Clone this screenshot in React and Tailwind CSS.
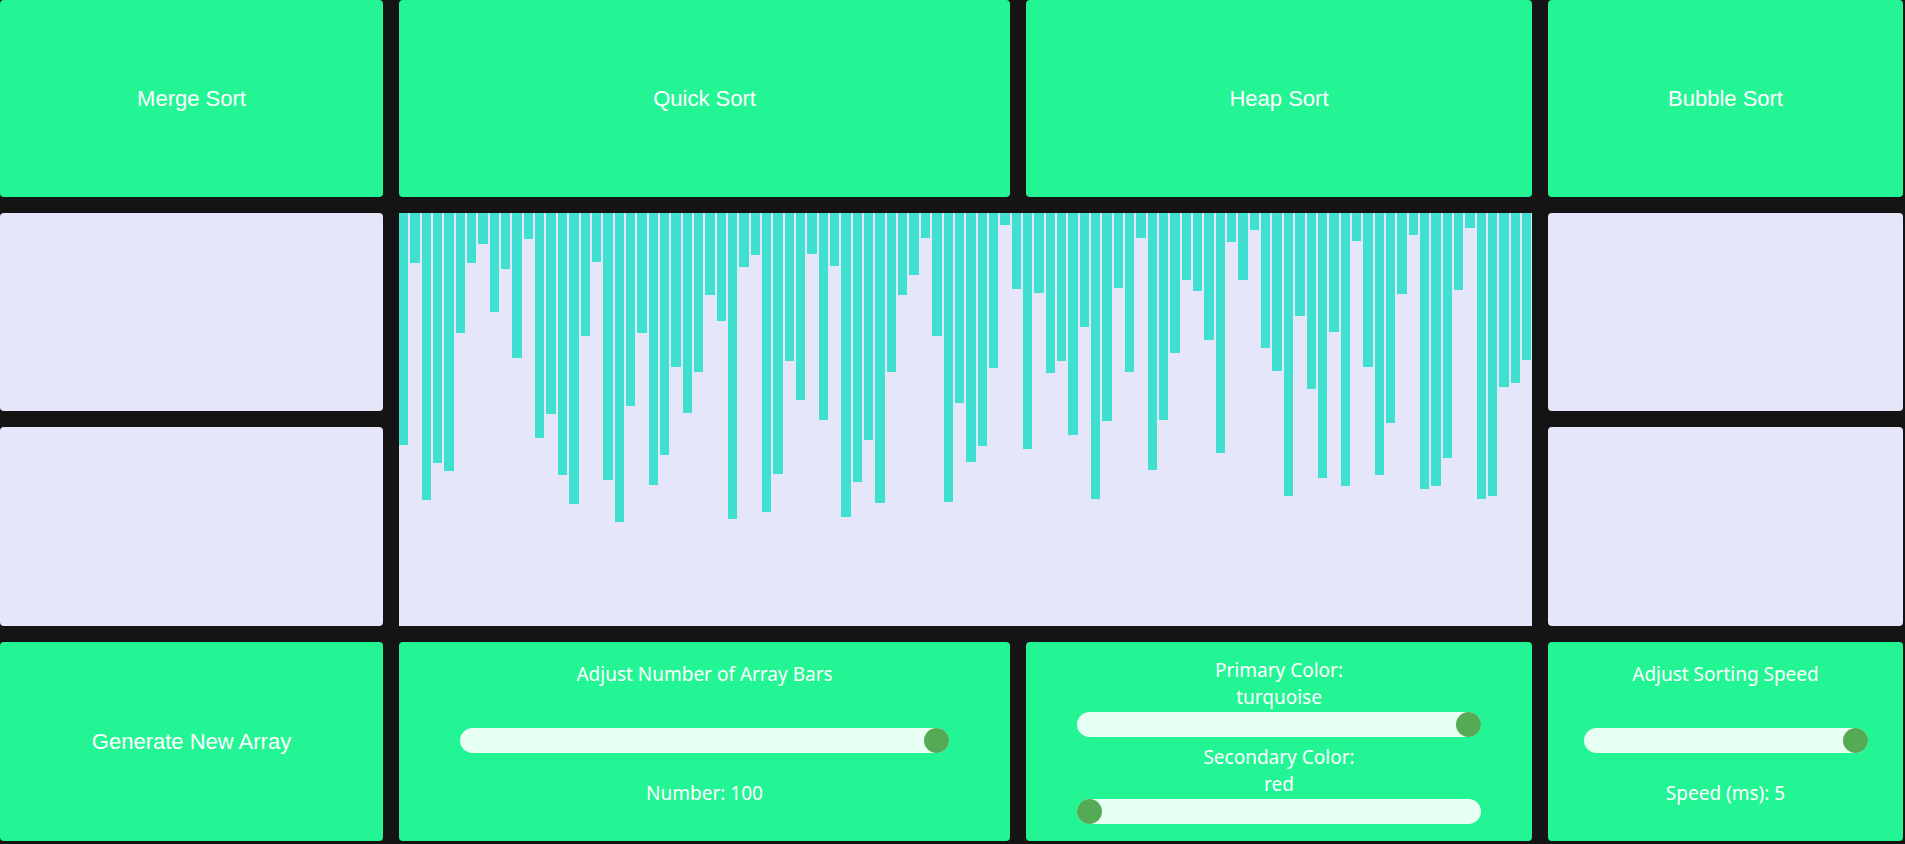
import React from 'react';

const BAR_HEIGHTS = [
  232, 50, 287, 250, 258, 120, 50, 31, 99, 56, 145, 26, 225, 201, 262, 291, 123, 49, 267, 309,
  193, 120, 272, 242, 154, 200, 159, 82, 108, 306, 54, 42, 299, 261, 148, 187, 41, 207, 53, 304,
  269, 227, 290, 159, 82, 62, 25, 123, 289, 190, 249, 233, 155, 12, 76, 236, 80, 160, 148, 222,
  114, 286, 208, 75, 159, 25, 257, 207, 140, 67, 78, 127, 240, 29, 67, 17, 135, 158, 283, 103,
  176, 265, 119, 273, 28, 154, 262, 210, 81, 22, 276, 273, 245, 77, 15, 286, 283, 174, 170, 147,
];

const SortButton = ({ label }) => (
  <button className="bg-[#24f594] rounded text-white text-[22px] font-['Liberation_Sans',Arial,sans-serif] flex items-center justify-center">
    {label}
  </button>
);

const Slider = ({ atEnd }) => (
  <div className={`w-4/5 mx-auto h-[25px] rounded-full bg-[#e8fff3] flex ${atEnd ? 'justify-end' : 'justify-start'}`}>
    <div className="w-[25px] h-[25px] rounded-full bg-[#55ab55]" />
  </div>
);

const App = () => {
  return (
    <div className="w-full h-screen bg-[#141414] overflow-hidden">
      <div className="grid grid-cols-[383px_611px_506px_355px] grid-rows-[197px_198px_199px_199px] gap-4">
        <SortButton label="Merge Sort" />
        <SortButton label="Quick Sort" />
        <SortButton label="Heap Sort" />
        <SortButton label="Bubble Sort" />

        <div className="bg-[#e6e6fa] rounded" />

        {/* array bars */}
        <div className="col-span-2 row-span-2 bg-[#e6e6fa] flex items-start gap-[2px]">
          {BAR_HEIGHTS.map((h, i) => (
            <div key={i} className="flex-1 bg-[#40e0d0]" style={{ height: `${h}px` }} />
          ))}
        </div>

        <div className="bg-[#e6e6fa] rounded" />
        <div className="bg-[#e6e6fa] rounded" />
        <div className="bg-[#e6e6fa] rounded" />

        <button className="bg-[#24f594] rounded text-white text-[22px] font-['Liberation_Sans',Arial,sans-serif] flex items-center justify-center">
          Generate New Array
        </button>

        <div className="bg-[#24f594] rounded text-white text-center text-[19px] leading-[27px] font-['Noto_Sans',sans-serif] pt-[19px]">
          <p>Adjust Number of Array Bars</p>
          <div className="mt-[40px]">
            <Slider atEnd />
          </div>
          <p className="mt-[27px]">Number: 100</p>
        </div>

        <div className="bg-[#24f594] rounded text-white text-center text-[19px] leading-[27px] font-['Noto_Sans',sans-serif] pt-[15px]">
          <p>Primary Color:</p>
          <p>turquoise</p>
          <div className="mt-[1px]">
            <Slider atEnd />
          </div>
          <p className="mt-[7px]">Secondary Color:</p>
          <p>red</p>
          <div className="mt-[1px]">
            <Slider />
          </div>
        </div>

        <div className="bg-[#24f594] rounded text-white text-center text-[19px] leading-[27px] font-['Noto_Sans',sans-serif] pt-[19px]">
          <p>Adjust Sorting Speed</p>
          <div className="mt-[40px]">
            <Slider atEnd />
          </div>
          <p className="mt-[27px]">Speed (ms): 5</p>
        </div>
      </div>
    </div>
  );
};

export default App;
